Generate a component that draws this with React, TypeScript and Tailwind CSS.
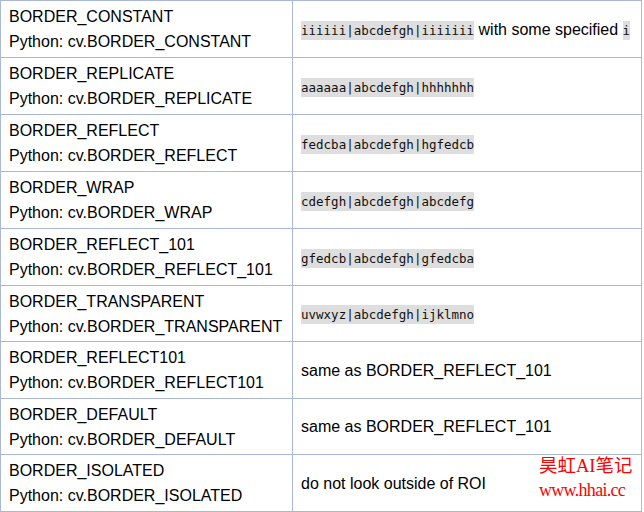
const rows: { name: string; desc: React.ReactNode; short?: boolean }[] = [
  {
    name: 'BORDER_CONSTANT',
    desc: (
      <>
        <Code>iiiiii|abcdefgh|iiiiiii</Code> with some specified <Code>i</Code>
      </>
    ),
  },
  { name: 'BORDER_REPLICATE', desc: <Code>aaaaaa|abcdefgh|hhhhhhh</Code> },
  { name: 'BORDER_REFLECT', desc: <Code>fedcba|abcdefgh|hgfedcb</Code> },
  { name: 'BORDER_WRAP', desc: <Code>cdefgh|abcdefgh|abcdefg</Code> },
  { name: 'BORDER_REFLECT_101', desc: <Code>gfedcb|abcdefgh|gfedcba</Code> },
  { name: 'BORDER_TRANSPARENT', desc: <Code>uvwxyz|abcdefgh|ijklmno</Code>, short: true },
  { name: 'BORDER_REFLECT101', desc: 'same as BORDER_REFLECT_101' },
  { name: 'BORDER_DEFAULT', desc: 'same as BORDER_REFLECT_101', short: true },
  { name: 'BORDER_ISOLATED', desc: 'do not look outside of ROI' },
];

function Code({ children }: { children: React.ReactNode }) {
  return (
    <code className="bg-[#dedede] py-[2px] text-[12.5px] leading-[12px] text-[#111] font-['DejaVu_Sans_Mono',monospace]">
      {children}
    </code>
  );
}

export default function App() {
  return (
    <div className="relative w-[644px] h-[512px] overflow-hidden bg-white font-['Liberation_Sans',Arial,sans-serif] text-[16px] leading-[25px] text-black">
      <table className="table-fixed border-separate border-spacing-0 w-[642px] border-t border-l border-[#a9b8d9]">
        <colgroup>
          <col className="w-[292px]" />
          <col />
        </colgroup>
        <tbody>
          {rows.map((r) => (
            <tr key={r.name}>
              <td className={`border-r border-b border-[#a9b8d9] px-2 pt-[3px] align-middle ${r.short ? 'pb-[2px]' : 'pb-[3px]'}`}>
                <div className="h-[50px] overflow-hidden">
                  {r.name}
                  <br />
                  Python: cv.{r.name}
                </div>
              </td>
              <td className="border-r border-b border-[#a9b8d9] px-2 py-[2px] align-middle whitespace-nowrap">
                {r.desc}
              </td>
            </tr>
          ))}
        </tbody>
      </table>

      {/* watermark */}
      <div className="absolute left-[539px] top-[454px] text-[#ff0000] leading-[24px]">
        <div className="text-[18.5px] font-['Liberation_Serif','Noto_Sans_CJK_SC',serif]">昊虹AI笔记</div>
        <div className="text-[18px] tracking-[-0.7px] font-['Liberation_Serif',serif]">www.hhai.cc</div>
      </div>
    </div>
  );
}
